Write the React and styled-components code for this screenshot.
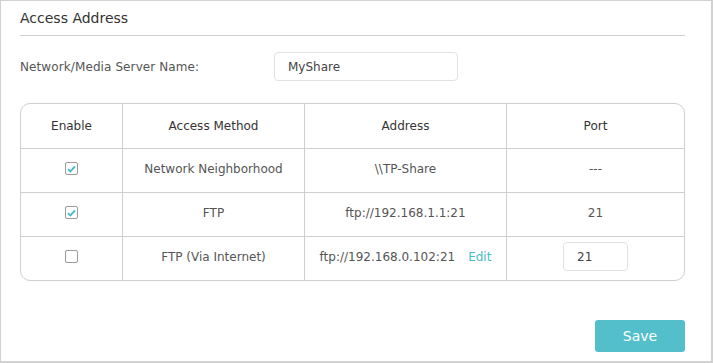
import React from 'react';
import styled, { createGlobalStyle } from 'styled-components';

const GlobalStyle = createGlobalStyle`
  body {
    margin: 0;
    background: #fff;
    font-family: "DejaVu Sans", Verdana, sans-serif;
  }
`;

const Frame = styled.div`
  box-sizing: border-box;
  width: 713px;
  height: 363px;
  border: 1px solid #d2d2d2;
  border-right-width: 2px;
  border-bottom-width: 2px;
  padding: 0 26px 0 19px;
  display: flex;
  flex-direction: column;
`;

const Title = styled.h2`
  margin: 0;
  padding: 8px 0 8px;
  font-size: 14px;
  font-weight: normal;
  color: #333;
  border-bottom: 1px solid #cfcfcf;
  line-height: 18px;
`;

const FieldRow = styled.div`
  display: flex;
  align-items: center;
  margin-top: 16px;
`;

const Label = styled.label`
  width: 254px;
  font-size: 12px;
  letter-spacing: 0.1px;
  color: #555;
`;

const TextInput = styled.input`
  box-sizing: border-box;
  width: ${p => p.$w}px;
  height: 29px;
  border: 1px solid #e2e2e2;
  border-radius: 4px;
  padding: 0 0 0 13px;
  font: 12px "DejaVu Sans", Verdana, sans-serif;
  color: #444;
  outline: none;
`;

const Table = styled.div`
  margin-top: 22px;
  border: 1px solid #cfcfcf;
  border-radius: 10px;
  display: grid;
  grid-template-columns: 101px 182px 202px 1fr;
  overflow: hidden;
`;

const Cell = styled.div`
  box-sizing: border-box;
  height: 44px;
  display: flex;
  align-items: center;
  justify-content: center;
  font-size: 12px;
  color: ${p => (p.$head ? '#333' : '#555')};
  border-left: ${p => (p.$first ? 'none' : '1px solid #cfcfcf')};
  border-top: ${p => (p.$top ? 'none' : '1px solid #cfcfcf')};
  padding-bottom: ${p => (p.$head ? 0 : 4)}px;
`;

const Box = styled.span`
  box-sizing: border-box;
  width: 13px;
  height: 13px;
  border: 1px solid #9a9a9a;
  border-radius: 2px;
  display: flex;
  align-items: center;
  justify-content: center;
`;

const EditLink = styled.a`
  color: #4abcc7;
  margin-left: 13px;
  cursor: pointer;
`;

const Footer = styled.div`
  display: flex;
  justify-content: flex-end;
  margin-top: 39px;
`;

const SaveButton = styled.button`
  width: 90px;
  height: 32px;
  background: #52bfca;
  border: none;
  border-radius: 3px;
  color: #fff;
  font: 14px "DejaVu Sans", Verdana, sans-serif;
`;

const Check = ({ checked }) => (
  <Box>
    {checked && (
      <svg width="9" height="8" viewBox="0 0 9 8">
        <path d="M1 4.2 L3.4 6.4 L8 1.4" fill="none" stroke="#4abcc7" strokeWidth="2" />
      </svg>
    )}
  </Box>
);

const rows = [
  { on: true, method: 'Network Neighborhood', address: '\\\\TP-Share', port: '---' },
  { on: true, method: 'FTP', address: 'ftp://192.168.1.1:21', port: '21' },
  { on: false, method: 'FTP (Via Internet)', address: 'ftp://192.168.0.102:21', edit: true, input: '21' },
];

export default function App() {
  return (
    <>
      <GlobalStyle />
      <Frame>
        <Title>Access Address</Title>
        <FieldRow>
          <Label>Network/Media Server Name:</Label>
          <TextInput $w={184} defaultValue="MyShare" />
        </FieldRow>
        <Table>
          {['Enable', 'Access Method', 'Address', 'Port'].map((h, i) => (
            <Cell key={h} $head $top $first={i === 0}>{h}</Cell>
          ))}
          {rows.map(r => (
            <React.Fragment key={r.method}>
              <Cell $first><Check checked={r.on} /></Cell>
              <Cell>{r.method}</Cell>
              <Cell>
                {r.address}
                {r.edit && <EditLink>Edit</EditLink>}
              </Cell>
              <Cell>
                {r.input ? <TextInput $w={65} defaultValue={r.input} /> : r.port}
              </Cell>
            </React.Fragment>
          ))}
        </Table>
        <Footer>
          <SaveButton>Save</SaveButton>
        </Footer>
      </Frame>
    </>
  );
}
